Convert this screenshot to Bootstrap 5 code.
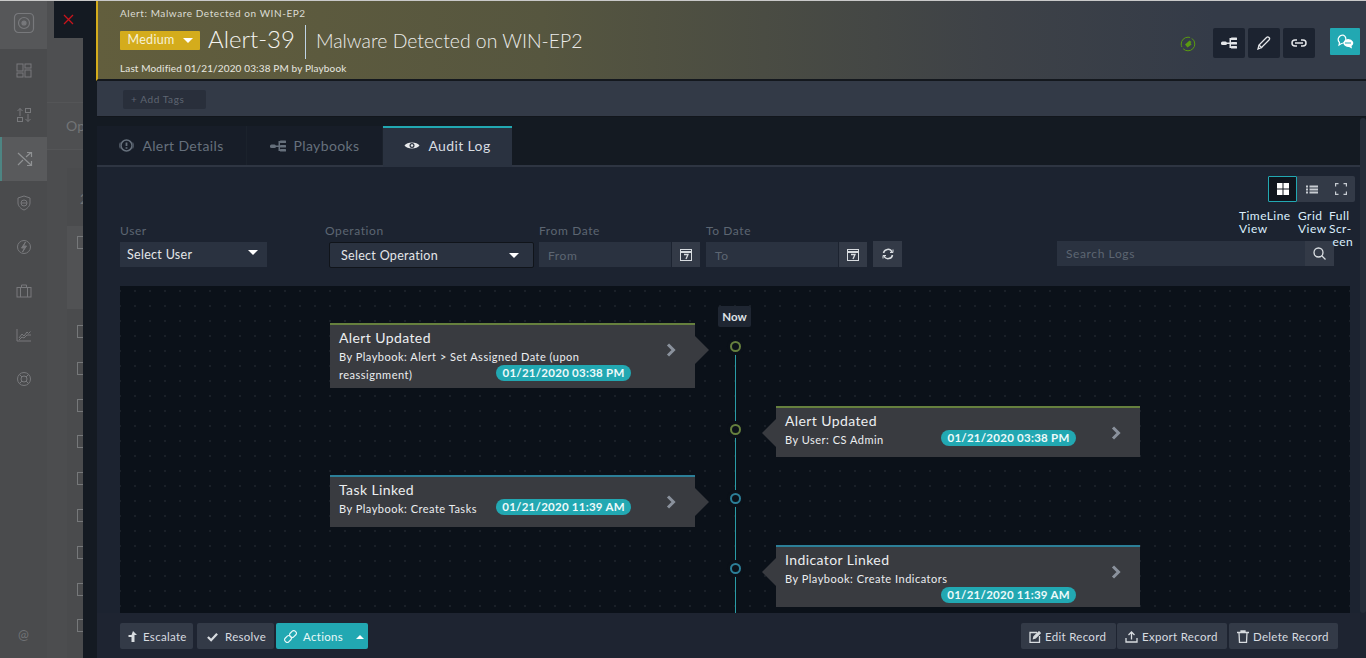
<!DOCTYPE html>
<html lang="en">
<head>
  <meta charset="UTF-8">
  <title>Alert-39</title>
  <link href="https://cdn.jsdelivr.net/npm/bootstrap@5.3.3/dist/css/bootstrap.min.css" rel="stylesheet">
  <style>
    html, body { height: 100%; }
    body { background: #4c4d4f; overflow: hidden; font-family: Lato, "Open Sans", sans-serif; font-size: 12px; color: #e4e6e9; letter-spacing: .3px; }
    .app-shell { height: 658px; border-top: 1px solid #c9c9c9; }

    .side-rail { width: 47px; background: #4a4b4d; flex: none; color: #78797c; }
    .rail-logo { height: 48px; background: #565759; padding-bottom: 5px; }
    .rail-item { height: 44px; }
    .rail-item.on { background: #595a5c; border-left: 2px solid #4d8583; color: #8f9193; }
    .rail-foot { height: 46px; color: #707275; font-size: 13px; }

    .dim-back { width: 36px; flex: none; background: #4c4d4f; position: relative; overflow: hidden; color: #727476; }
    .dim-top { height: 101px; background: #4e4f51; }
    .dim-op { height: 48px; background: #4e4f51; border-top: 1px solid #545557; border-bottom: 1px solid #545557; font-size: 14px; line-height: 46px; padding-left: 19px; }
    .dim-list { margin: 18px 0 0 20px; background: #4a4b4d; height: 491px; padding-top: 22px; }
    .dim-no { font-size: 14px; height: 34px; padding-left: 13px; line-height: 18px; }
    .dim-pick { background: #515254; height: 83px; margin-bottom: 16px; margin-top: 2px; padding-top: 10px; }
    .dim-box { width: 7px; height: 13px; border: 1px solid #76787a; border-right: 0; margin-left: 10px; margin-bottom: 23.8px; }
    .dim-pick .dim-box { margin-bottom: 0; }
    .close-tab { position: absolute; left: 54px; top: 1px; width: 29px; height: 37px; background: #141a22; color: #c8141c; z-index: 2; }

    .gutter { width: 14px; flex: none; background: #141a22; }
    .drawer { flex: 1; min-width: 0; background: #1c2330; position: relative; }

    .alert-head { height: 80px; background: linear-gradient(90deg, #625e3d 0%, #56563f 35%, #3e4247 70%, #343b48 88%); border-left: 2px solid #d4ac1c; border-bottom: 2px solid #14181e; padding: 4px 0 0 22px; margin-left: -1px; }
    .head-crumb { font-size: 10px; color: #dcdcd4; line-height: 17px; letter-spacing: .57px; }
    .head-row { margin-top: 1px; }
    .sev-pill { width: 80px; height: 19px; background: #d4ac1c; color: #f6f1d8; font-size: 12.5px; border-radius: 1px; margin-bottom: 3px; }
    .alert-no { font-size: 24px; font-weight: 300; color: #f4f4f0; line-height: 32px; letter-spacing: 0; margin-bottom: 5px; }
    .alert-sep { width: 1px; height: 34px; background: #c0d4e6; margin: 0 10px; }
    .alert-name { font-size: 19.4px; font-weight: 300; color: #ececea; letter-spacing: 0; margin-bottom: 2px; }
    .head-mod { font-size: 10px; color: #e8e8e0; line-height: 14px; margin-top: 1px; letter-spacing: .14px; }
    .head-tools { padding-right: 6px; padding-top: 23px; }
    .stat-ico { margin: 8px 17px 0 0; }
    .tool-set { gap: 3px; }
    .tool-btn { width: 32px; height: 30px; background: #1c2330; border-radius: 2px; }
    .chat-btn { width: 30px; height: 27px; background: #22a8b2; border-radius: 1px; margin-left: 15px; }

    .tags-bar { height: 36px; background: #333a47; border-bottom: 1px solid #12161c; padding: 9px 0 0 26px; }
    .add-tags { width: 83px; height: 19px; background: #292f3b; color: #5f6672; font-size: 10px; padding-left: 8px; border-radius: 2px; line-height: 19px; letter-spacing: .6px; }

    .tab-band { height: 50px; background: #141a22; border-bottom: 2px solid #2e3542; padding-top: 9px; }
    .tab-item { height: 39px; color: #66707c; font-size: 14px; border-right: 1px solid #1b222c; letter-spacing: .37px; background: #171d28; }
    .tab-item.on { background: #2a3240; color: #d8dce0; border-top: 2px solid #22a8b2; height: 41px; border-right: 0; padding-bottom: 5px; }
    .tab-a { width: 150px; }
    .tab-b { width: 136px; }
    .tab-c { width: 129px; }

    .view-zone { height: 57px; padding: 9px 11px 0 0; }
    .view-seg { background: #333a47; height: 26px; border-radius: 2px; }
    .view-btn { width: 29px; height: 26px; color: #c8ccd2; }
    .view-btn.on { background: #10151d; border: 1px solid #22a8b2; color: #fff; border-radius: 1px; }
    .view-lbls { font-size: 12px; line-height: 13px; color: #dbeefc; letter-spacing: .45px; position: relative; }
    .view-lbls div { position: absolute; top: 7px; }
    .lbl-a { left: -29px; }
    .lbl-b { left: 30px; }
    .lbl-c { left: 61px; }

    .filter-zone { height: 62px; padding-left: 23px; }
    .fld-lbl { font-size: 12px; color: #5d6672; line-height: 14px; height: 18px; letter-spacing: .6px; }
    .fld-sel { height: 25px; background: #2a3240; color: #e4e6e9; padding: 2px 7px 0; font-size: 12.5px; }
    .fld-sel.dark { border: 1px solid #10141a; height: 26px; padding: 2px 14px 0 11px; border-radius: 2px; }
    .caret-d { width: 0; height: 0; border-left: 5px solid transparent; border-right: 5px solid transparent; border-top: 5px solid #fff; }
    .caret-u { width: 0; height: 0; border-left: 4px solid transparent; border-right: 4px solid transparent; border-bottom: 4px solid #fff; }
    .caret-hi { margin: 0 2px 7px 0; }
    .caret-op { margin-bottom: 2px; }
    .fld-in { height: 25px; background: #2a3240; color: #5d6672; padding-left: 9px; line-height: 27px; letter-spacing: .6px; }
    .fld-btn { width: 28px; height: 25px; background: #333a47; color: #d8dce0; margin-left: 1px; }
    .w-user { width: 147px; }
    .w-op { width: 205px; }
    .w-date { width: 132px; }
    .w-search { width: 248px; line-height: 25px; }
    .op-wrap { margin-left: 62px; width: 205px; }
    .op-lbl { margin-left: -4px; }
    .from-wrap { margin-left: 5px; }
    .to-wrap { margin-left: 6px; }
    .sync-btn { width: 29px; height: 26px; margin: -1px 0 0 6px; }
    .search-wrap { margin: 17px 32px 0 auto; }
    .search-btn { width: 29px; margin: 0; }

    .time-canvas { height: 327px; margin: 0 16px 0 23px; padding: 37px 0 0 210px; position: relative; overflow: hidden; background-color: #0b1119; background-image: radial-gradient(circle, #454d57 0.6px, transparent 0.9px); background-size: 15px 15px; background-position: -7.5px -2.5px; }
    .time-line { position: absolute; left: 615px; top: 60px; bottom: 0; width: 1px; background: #2a9ca6; }
    .now-tag { position: absolute; left: 598px; top: 20px; width: 33px; height: 21px; background: #1f2632; color: #dfe2e6; font-weight: 700; font-size: 11.5px; border-radius: 2px; letter-spacing: 0; }
    .log-row { width: 810px; display: grid; grid-template-columns: 365px 81px 364px; margin-bottom: 18px; position: relative; }
    .log-card { background: #393b40; border-top: 2px solid #66803e; padding: 4px 9px; position: relative; color: #eceef0; }
    .log-card.teal { border-top-color: #2c7f98; }
    .log-card.go-r::after { content: ""; position: absolute; left: 100%; top: 11px; border-left: 14px solid #393b40; border-top: 14px solid transparent; border-bottom: 14px solid transparent; }
    .log-card.go-l::before { content: ""; position: absolute; right: 100%; top: 11px; border-right: 14px solid #393b40; border-top: 14px solid transparent; border-bottom: 14px solid transparent; }
    .h-65 { height: 65px; }
    .h-51 { height: 51px; }
    .h-52 { height: 52px; }
    .h-62 { height: 62px; }
    .log-ttl { font-size: 14px; line-height: 18px; letter-spacing: .4px; }
    .log-sub { font-size: 11px; line-height: 18px; margin-top: 1px; width: 260px; letter-spacing: .5px; }
    .log-time { position: absolute; background: #22a8b2; color: #eefafa; border-radius: 9px; font-size: 11.5px; font-weight: 700; height: 16px; line-height: 16px; width: 135px; text-align: center; letter-spacing: .25px; top: 22px; left: 165px; }
    .log-time.low { top: 40px; }
    .log-time.nudge { left: 166px; }
    .log-go { position: absolute; right: 19px; top: 18px; color: #8a919c; }
    .log-dot { width: 11px; height: 11px; border-radius: 50%; border: 2px solid #66803e; background: #0b1119; position: relative; z-index: 1; margin: 18px 0 0 35px; box-shadow: 0 0 0 3px #0b1119; }
    .log-dot.teal { border-color: #2c7f98; }

    .foot-bar { position: absolute; left: 0; right: 0; bottom: 0; height: 45px; background: #1e2431; padding: 10px 28px 0 23px; }
    .foot-btn { height: 26px; background: #333a47; color: #d8dce0; border-radius: 2px; font-size: 11.5px; letter-spacing: .3px; padding: 1px 0 0 8px; }
    .foot-btn.act { background: #22a8b2; color: #e8f8f8; }
    .b-esc { width: 73px; margin-right: 4px; gap: 6px; }
    .b-res { width: 77px; margin-right: 2px; padding-left: 10px; gap: 7px; }
    .b-act { width: 92px; gap: 6px; }
    .caret-act { margin-left: 7px; }
    .b-edit { width: 95px; margin-right: 1px; }
    .b-exp { width: 110px; margin-right: 2px; }
    .b-del { width: 109px; }
    .right-scroll { position: absolute; right: 0; top: 117px; bottom: 45px; width: 6px; background: #262d39; border-radius: 3px; }
  </style>
</head>
<body>
  <div class="app-shell d-flex">

    <div class="side-rail d-flex flex-column">
      <div class="rail-logo d-flex align-items-center justify-content-center">
        <svg width="22" height="22" viewBox="0 0 22 22" fill="none" stroke="currentColor" stroke-width="1.2"><rect x="1.5" y="1.5" width="19" height="19" rx="4"/><circle cx="11" cy="11" r="5.5"/><circle cx="11" cy="11" r="2" fill="currentColor"/></svg>
      </div>
      <div class="rail-item d-flex align-items-center justify-content-center">
        <svg width="16" height="16" viewBox="0 0 16 16" fill="none" stroke="currentColor"><rect x="1" y="1" width="6" height="7"/><rect x="9" y="1" width="6" height="4"/><rect x="1" y="10" width="6" height="4"/><rect x="9" y="7" width="6" height="7"/></svg>
      </div>
      <div class="rail-item d-flex align-items-center justify-content-center">
        <svg width="16" height="16" viewBox="0 0 16 16" fill="none" stroke="currentColor"><path d="M4 9V1.500M1.500 4 4 1.500 6.500 4M12 7v7.500M9.500 12l2.500 2.500 2.500-2.500"/><rect x="9.500" y="1.500" width="5" height="4"/><rect x="1.500" y="10.500" width="5" height="4"/></svg>
      </div>
      <div class="rail-item on d-flex align-items-center justify-content-center">
        <svg width="16" height="16" viewBox="0 0 16 16" fill="none" stroke="currentColor" stroke-width="1.2"><path d="M1 2l13 12M1 14 6 9M9 6l5-4.500M10 1.500h4.500V6M14.500 10v4.500H10"/></svg>
      </div>
      <div class="rail-item d-flex align-items-center justify-content-center">
        <svg width="14" height="16" viewBox="0 0 14 16" fill="none" stroke="currentColor"><path d="M7 1l6 2v5c0 3-3 6-6 7-3-1-6-4-6-7V3z"/><circle cx="7" cy="8" r="3"/><path d="M4 8h6"/></svg>
      </div>
      <div class="rail-item d-flex align-items-center justify-content-center">
        <svg width="16" height="16" viewBox="0 0 16 16" fill="none" stroke="currentColor"><circle cx="8" cy="8" r="6.500"/><path d="M9.500 3 5.500 9h3L6.500 13l4-6h-3z" fill="currentColor"/></svg>
      </div>
      <div class="rail-item d-flex align-items-center justify-content-center">
        <svg width="16" height="14" viewBox="0 0 16 14" fill="none" stroke="currentColor"><rect x="1" y="3.500" width="14" height="9.500"/><path d="M5.500 3.500V1h5v2.500M4.500 3.500V13M11.500 3.500V13"/></svg>
      </div>
      <div class="rail-item d-flex align-items-center justify-content-center">
        <svg width="16" height="14" viewBox="0 0 16 14" fill="none" stroke="currentColor"><path d="M1 1v12h14M3 10l3-4 2 2 3-4 1.500 1.500 2-2M3 12l3-3 2 1 3-3 4 0"/></svg>
      </div>
      <div class="rail-item d-flex align-items-center justify-content-center">
        <svg width="16" height="16" viewBox="0 0 16 16" fill="none" stroke="currentColor"><circle cx="8" cy="8" r="6.500"/><circle cx="8" cy="8" r="3"/><path d="M3.500 3.500l2.500 2.500M12.500 3.500 10 6M3.500 12.500 6 10M12.500 12.500 10 10"/></svg>
      </div>
      <div class="rail-foot d-flex align-items-center justify-content-center mt-auto">@</div>
    </div>

    <div class="dim-back">
      <div class="dim-top"></div>
      <div class="dim-op">Op</div>
      <div class="dim-list">
        <div class="dim-no">2</div>
        <div class="dim-pick"><div class="dim-box"></div></div>
        <div class="dim-box"></div>
        <div class="dim-box"></div>
        <div class="dim-box"></div>
        <div class="dim-box"></div>
        <div class="dim-box"></div>
        <div class="dim-box"></div>
        <div class="dim-box"></div>
        <div class="dim-box"></div>
        <div class="dim-box"></div>
      </div>
    </div>
    <div class="close-tab d-flex align-items-center justify-content-center">
      <svg width="11" height="11" viewBox="0 0 11 11" stroke="currentColor" stroke-width="1.300"><path d="M1 1l9 9M10 1l-9 9"/></svg>
    </div>

    <div class="gutter"></div>

    <div class="drawer">
      <div class="alert-head d-flex justify-content-between">
        <div>
          <div class="head-crumb">Alert: Malware Detected on WIN-EP2</div>
          <div class="head-row d-flex align-items-center">
            <div class="sev-pill d-flex align-items-center justify-content-center gap-2">Medium <span class="caret-d"></span></div>
            <div class="alert-no ms-2">Alert-39</div>
            <div class="alert-sep"></div>
            <div class="alert-name">Malware Detected on WIN-EP2</div>
          </div>
          <div class="head-mod">Last Modified 01/21/2020 03:38 PM by Playbook</div>
        </div>
        <div class="head-tools d-flex align-items-start">
          <svg class="stat-ico" width="16" height="16" viewBox="0 0 16 16" fill="none"><circle cx="8" cy="8" r="6.800" stroke="#5a9a10" stroke-dasharray="16 2"/><path d="M5 8.500 9.500 4.500 11.500 6l-1 1 1 1.500-4 3z" fill="#5a9a10"/></svg>
          <div class="tool-set d-flex">
            <div class="tool-btn d-flex align-items-center justify-content-center">
              <svg width="16" height="12" viewBox="0 0 16 12" fill="#e4e6e9"><rect x="0" y="4.500" width="6" height="3.500" rx="1.500"/><rect x="6" y="5.500" width="3" height="1.500"/><rect x="8.500" y="1" width="1.500" height="10"/><rect x="10" y="0.500" width="6" height="2.500" rx=".5"/><rect x="10" y="5" width="6" height="2.500" rx=".5"/><rect x="10" y="9" width="6" height="2.500" rx=".5"/></svg>
            </div>
            <div class="tool-btn d-flex align-items-center justify-content-center">
              <svg width="14" height="14" viewBox="0 0 14 14" fill="none" stroke="#e4e6e9" stroke-width="1.300"><path d="M1 13l1-4 7.500-7.500a1.500 1.500 0 0 1 2.500 2.500L4.500 11.500z"/><path d="M2 9l3 3" /></svg>
            </div>
            <div class="tool-btn d-flex align-items-center justify-content-center">
              <svg width="16" height="8" viewBox="0 0 16 8" fill="none" stroke="#e4e6e9" stroke-width="1.500"><path d="M6 1H4a3 3 0 0 0 0 6h2M10 1h2a3 3 0 0 1 0 6h-2M4 4h8"/></svg>
            </div>
          </div>
          <div class="chat-btn d-flex align-items-center justify-content-center">
            <svg width="17" height="15" viewBox="0 0 17 15"><path d="M6 1a5 4.500 0 0 0-3.500 7.500L2 11l2.500-1.500A5 4.500 0 0 0 6 1z" fill="none" stroke="#fff" stroke-width="1.200"/><path d="M11 5a5 4 0 0 1 3.500 7l.5 2.500-3-1.500a5 4 0 1 1-1-8z" fill="#fff"/><path d="M8 9h6" stroke="#22a8b2"/></svg>
          </div>
        </div>
      </div>

      <div class="tags-bar"><div class="add-tags">+ Add Tags</div></div>

      <div class="tab-band d-flex">
        <div class="tab-item tab-a d-flex align-items-center justify-content-center gap-2">
          <svg width="15" height="15" viewBox="0 0 15 15" fill="none" stroke="currentColor" stroke-width="1.500"><circle cx="7.500" cy="7.500" r="5.500"/><path d="M7.500 4.500v3.500M7.500 9.200v1.500" stroke-width="1.800"/><path d="M1.200 4.500a7 7 0 0 0 0 6M13.800 4.500a7 7 0 0 1 0 6" stroke-width=".8"/></svg>
          Alert Details
        </div>
        <div class="tab-item tab-b d-flex align-items-center justify-content-center gap-2">
          <svg width="16" height="12" viewBox="0 0 16 12" fill="currentColor"><rect x="0" y="4.500" width="6" height="3.500" rx="1.500"/><rect x="6" y="5.500" width="3" height="1.500"/><rect x="8.500" y="1" width="1.500" height="10"/><rect x="10" y="0.500" width="6" height="2.500" rx=".5"/><rect x="10" y="5" width="6" height="2.500" rx=".5"/><rect x="10" y="9" width="6" height="2.500" rx=".5"/></svg>
          Playbooks
        </div>
        <div class="tab-item tab-c on d-flex align-items-center justify-content-center gap-2">
          <svg width="16" height="11" viewBox="0 0 16 11"><path d="M.5 5.500C3 1.500 13 1.500 15.500 5.500 13 9.500 3 9.500 .5 5.500z" fill="#e8eaec"/><circle cx="8" cy="5.500" r="2.500" fill="#2a3240"/><circle cx="8" cy="5.500" r="1.200" fill="#e8eaec"/></svg>
          Audit Log
        </div>
      </div>

      <div class="view-zone d-flex justify-content-end">
        <div>
          <div class="view-seg d-flex">
            <div class="view-btn on d-flex align-items-center justify-content-center">
              <svg width="12" height="12" viewBox="0 0 12 12" fill="currentColor"><rect width="5.500" height="5.500"/><rect x="6.500" width="5.500" height="5.500"/><rect y="6.500" width="5.500" height="5.500"/><rect x="6.500" y="6.500" width="5.500" height="5.500"/></svg>
            </div>
            <div class="view-btn d-flex align-items-center justify-content-center">
              <svg width="12" height="9" viewBox="0 0 12 9" fill="currentColor"><rect y=".5" width="2" height="2"/><rect y="3.500" width="2" height="2"/><rect y="6.500" width="2" height="2"/><rect x="3.500" y=".5" width="8.500" height="2"/><rect x="3.500" y="3.500" width="8.500" height="2"/><rect x="3.500" y="6.500" width="8.500" height="2"/></svg>
            </div>
            <div class="view-btn d-flex align-items-center justify-content-center">
              <svg width="12" height="12" viewBox="0 0 12 12" fill="none" stroke="currentColor" stroke-width="1.200"><path d="M.6 3.500V.6h2.900M8.500.6h2.900v2.900M11.400 8.500v2.900H8.500M3.500 11.400H.6V8.500"/></svg>
            </div>
          </div>
          <div class="view-lbls">
            <div class="lbl-a">TimeLine<br>View</div>
            <div class="lbl-b">Grid<br>View</div>
            <div class="lbl-c">Full<br>Scr-<br>&nbsp;een</div>
          </div>
        </div>
      </div>

      <div class="filter-zone d-flex align-items-start">
        <div class="w-user">
          <div class="fld-lbl">User</div>
          <div class="fld-sel d-flex align-items-center justify-content-between">Select User <span class="caret-d caret-hi"></span></div>
        </div>
        <div class="op-wrap">
          <div class="fld-lbl op-lbl">Operation</div>
          <div class="fld-sel dark w-op d-flex align-items-center justify-content-between">Select Operation <span class="caret-d caret-op"></span></div>
        </div>
        <div class="from-wrap d-flex flex-column">
          <div class="fld-lbl">From Date</div>
          <div class="d-flex">
            <div class="fld-in w-date">From</div>
            <div class="fld-btn d-flex align-items-center justify-content-center">
              <svg width="12" height="13" viewBox="0 0 12 13" fill="none" stroke="currentColor"><rect x=".5" y="1.500" width="11" height="11"/><path d="M.5 4h11" stroke-width="2"/><path d="M4 6.500h4L6 11" stroke-width="1.300"/></svg>
            </div>
          </div>
        </div>
        <div class="to-wrap d-flex flex-column">
          <div class="fld-lbl">To Date</div>
          <div class="d-flex align-items-start">
            <div class="fld-in w-date">To</div>
            <div class="fld-btn d-flex align-items-center justify-content-center">
              <svg width="12" height="13" viewBox="0 0 12 13" fill="none" stroke="currentColor"><rect x=".5" y="1.500" width="11" height="11"/><path d="M.5 4h11" stroke-width="2"/><path d="M4 6.500h4L6 11" stroke-width="1.300"/></svg>
            </div>
            <div class="fld-btn sync-btn d-flex align-items-center justify-content-center">
              <svg width="12" height="12" viewBox="0 0 12 12" fill="none" stroke="currentColor" stroke-width="1.500"><path d="M1.500 5A4.500 4.500 0 0 1 10 4M10.500 7A4.500 4.500 0 0 1 2 8"/><path d="M8 4.500h3v-3M4 7.500H1v3" stroke-width="1"/></svg>
            </div>
          </div>
        </div>
        <div class="search-wrap d-flex">
          <div class="fld-in w-search">Search Logs</div>
          <div class="fld-btn search-btn d-flex align-items-center justify-content-center">
            <svg width="13" height="13" viewBox="0 0 13 13" fill="none" stroke="currentColor" stroke-width="1.300"><circle cx="5.500" cy="5.500" r="4.500"/><path d="M9 9l3.500 3.500"/></svg>
          </div>
        </div>
      </div>

      <div class="time-canvas">
        <div class="time-line"></div>
        <div class="now-tag d-flex align-items-center justify-content-center">Now</div>

        <div class="log-row">
          <div class="log-card go-r h-65">
            <div class="log-ttl">Alert Updated</div>
            <div class="log-sub">By Playbook: Alert &gt; Set Assigned Date (upon reassignment)</div>
            <div class="log-time low nudge">01/21/2020 03:38 PM</div>
            <svg class="log-go" width="10" height="14" viewBox="0 0 10 14" fill="none" stroke="currentColor" stroke-width="3"><path d="M2 1.500 7.500 7 2 12.500"/></svg>
          </div>
          <div><div class="log-dot"></div></div>
          <div></div>
        </div>

        <div class="log-row">
          <div></div>
          <div><div class="log-dot"></div></div>
          <div class="log-card go-l h-51">
            <div class="log-ttl">Alert Updated</div>
            <div class="log-sub">By User: CS Admin</div>
            <div class="log-time">01/21/2020 03:38 PM</div>
            <svg class="log-go" width="10" height="14" viewBox="0 0 10 14" fill="none" stroke="currentColor" stroke-width="3"><path d="M2 1.500 7.500 7 2 12.500"/></svg>
          </div>
        </div>

        <div class="log-row">
          <div class="log-card go-r teal h-52">
            <div class="log-ttl">Task Linked</div>
            <div class="log-sub">By Playbook: Create Tasks</div>
            <div class="log-time nudge">01/21/2020 11:39 AM</div>
            <svg class="log-go" width="10" height="14" viewBox="0 0 10 14" fill="none" stroke="currentColor" stroke-width="3"><path d="M2 1.500 7.500 7 2 12.500"/></svg>
          </div>
          <div><div class="log-dot teal"></div></div>
          <div></div>
        </div>

        <div class="log-row">
          <div></div>
          <div><div class="log-dot teal"></div></div>
          <div class="log-card go-l teal h-62">
            <div class="log-ttl">Indicator Linked</div>
            <div class="log-sub">By Playbook: Create Indicators</div>
            <div class="log-time low">01/21/2020 11:39 AM</div>
            <svg class="log-go" width="10" height="14" viewBox="0 0 10 14" fill="none" stroke="currentColor" stroke-width="3"><path d="M2 1.500 7.500 7 2 12.500"/></svg>
          </div>
        </div>
      </div>

      <div class="right-scroll"></div>

      <div class="foot-bar d-flex justify-content-between">
        <div class="d-flex">
          <div class="foot-btn b-esc d-flex align-items-center">
            <svg width="9" height="11" viewBox="0 0 9 11" fill="currentColor"><path d="M5 0 9 4H6.500v7h-3V6H0.500V4H3.500z"/></svg>
            Escalate
          </div>
          <div class="foot-btn b-res d-flex align-items-center">
            <svg width="11" height="10" viewBox="0 0 12 10" fill="none" stroke="currentColor" stroke-width="2.500"><path d="M1 5l3.500 3.500L11 1.500"/></svg>
            Resolve
          </div>
          <div class="foot-btn act b-act d-flex align-items-center">
            <svg width="13" height="13" viewBox="0 0 13 13" fill="none" stroke="currentColor" stroke-width="1.200"><rect x="6.500" y=".5" width="5" height="7" rx="2" transform="rotate(45 9 4)"/><rect x="1.500" y="5.500" width="5" height="7" rx="2" transform="rotate(45 4 9)"/></svg>
            Actions
            <span class="caret-u caret-act"></span>
          </div>
        </div>
        <div class="d-flex">
          <div class="foot-btn b-edit d-flex align-items-center gap-1">
            <svg width="12" height="12" viewBox="0 0 12 12" fill="none" stroke="currentColor" stroke-width="1.300"><path d="M8 1.500H1v9.800h9.500V5"/><path d="M4.500 7.500l.5-2L10 .8l1.300 1.300L6.500 7z" fill="currentColor"/></svg>
            Edit Record
          </div>
          <div class="foot-btn b-exp d-flex align-items-center gap-1">
            <svg width="13" height="12" viewBox="0 0 13 12" fill="none" stroke="currentColor" stroke-width="1.300"><path d="M1 7v4h11V7"/><path d="M6.500 8.500V2M3.500 4l3-3 3 3"/></svg>
            Export Record
          </div>
          <div class="foot-btn b-del d-flex align-items-center gap-1">
            <svg width="12" height="13" viewBox="0 0 12 13" fill="none" stroke="currentColor" stroke-width="1.300"><path d="M0 2.500h12M4 2.500V1h4v1.500M2 2.500l.5 10h7l.5-10"/></svg>
            Delete Record
          </div>
        </div>
      </div>
    </div>
  </div>
  <script src="https://cdn.jsdelivr.net/npm/bootstrap@5.3.3/dist/js/bootstrap.bundle.min.js"></script>
</body>
</html>
